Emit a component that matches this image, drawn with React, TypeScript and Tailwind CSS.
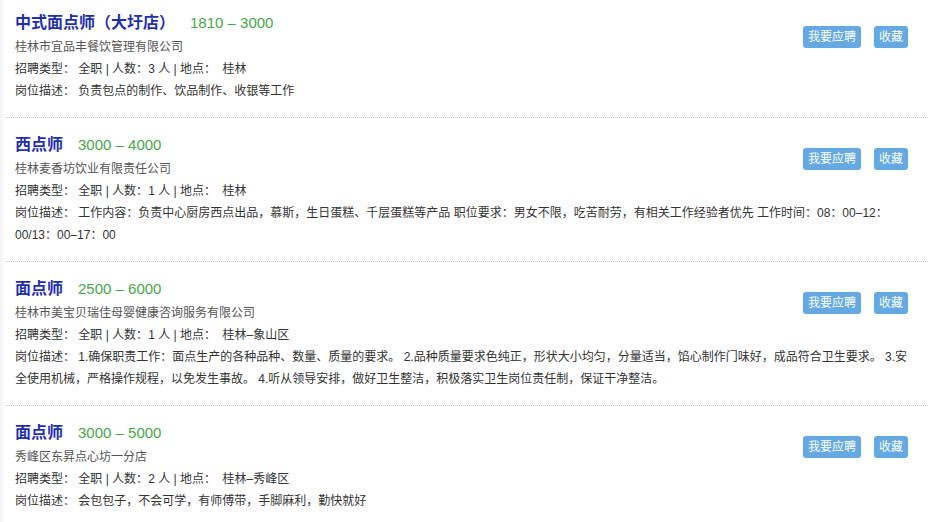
interface Job {
  id: number;
  title: string;
  salary: string;
  company: string;
  headcount: number;
  location: string;
  description: string;
}

const jobs: Job[] = [
  {
    id: 1,
    title: '中式面点师（大圩店）',
    salary: '1810 – 3000',
    company: '桂林市宜品丰餐饮管理有限公司',
    headcount: 3,
    location: '桂林',
    description: '负责包点的制作、饮品制作、收银等工作',
  },
  {
    id: 2,
    title: '西点师',
    salary: '3000 – 4000',
    company: '桂林麦香坊饮业有限责任公司',
    headcount: 1,
    location: '桂林',
    description:
      '工作内容：负责中心厨房西点出品，慕斯，生日蛋糕、千层蛋糕等产品 职位要求：男女不限，吃苦耐劳，有相关工作经验者优先 工作时间：08：00–12：00/13：00–17：00',
  },
  {
    id: 3,
    title: '面点师',
    salary: '2500 – 6000',
    company: '桂林市美宝贝瑞佳母婴健康咨询服务有限公司',
    headcount: 1,
    location: '桂林–象山区',
    description:
      '1.确保职责工作：面点生产的各种品种、数量、质量的要求。 2.品种质量要求色纯正，形状大小均匀，分量适当，馅心制作门味好，成品符合卫生要求。 3.安全使用机械，严格操作规程，以免发生事故。 4.听从领导安排，做好卫生整洁，积极落实卫生岗位责任制，保证干净整洁。',
  },
  {
    id: 4,
    title: '面点师',
    salary: '3000 – 5000',
    company: '秀峰区东昇点心坊一分店',
    headcount: 2,
    location: '桂林–秀峰区',
    description: '会包包子，不会可学，有师傅带，手脚麻利，勤快就好',
  },
];

export default function App() {
  return (
    <div
      className="min-h-[522px] w-full bg-white pl-[5px] shadow-[inset_6px_0_6px_-4px_rgba(0,0,0,0.06)]"
      style={{ fontFamily: '"Liberation Sans", "Noto Sans CJK SC", sans-serif' }}
    >
      {jobs.map((job, i) => (
        <div
          key={job.id}
          className={
            i === 0
              ? 'border-b border-dotted border-[#c8c8c8] pl-[10px] pr-[20px] pt-[10px] pb-[15px]'
              : 'border-b border-dotted border-[#c8c8c8] pl-[10px] pr-[20px] pt-[14px] pb-[15px]'
          }
        >
          <div className="float-right mt-[16px] flex gap-[13px]">
            <button
              type="button"
              className="h-[22px] rounded-[3px] bg-[#64a9e3] px-[5px] text-[12px] leading-[22px] text-white"
            >
              我要应聘
            </button>
            <button
              type="button"
              className="h-[22px] rounded-[3px] bg-[#64a9e3] px-[5px] text-[12px] leading-[22px] text-white"
            >
              收藏
            </button>
          </div>

          <div className="flex items-baseline leading-[26px]">
            <span className="text-[16px] font-bold text-[#1f2fb0]">{job.title}</span>
            <span className="ml-[15px] text-[15px] text-[#47a84b]">{job.salary}</span>
          </div>
          <div className="text-[12px] leading-[22px] text-[#555555]">{job.company}</div>
          <div className="text-[12px] leading-[22px] text-[#333333]">
            招聘类型：&nbsp;全职 | 人数：{job.headcount} 人 | 地点：&nbsp; {job.location}
          </div>
          <div className="text-[12px] leading-[22px] text-[#333333]">
            岗位描述：&nbsp;{job.description}
          </div>
        </div>
      ))}
    </div>
  );
}
